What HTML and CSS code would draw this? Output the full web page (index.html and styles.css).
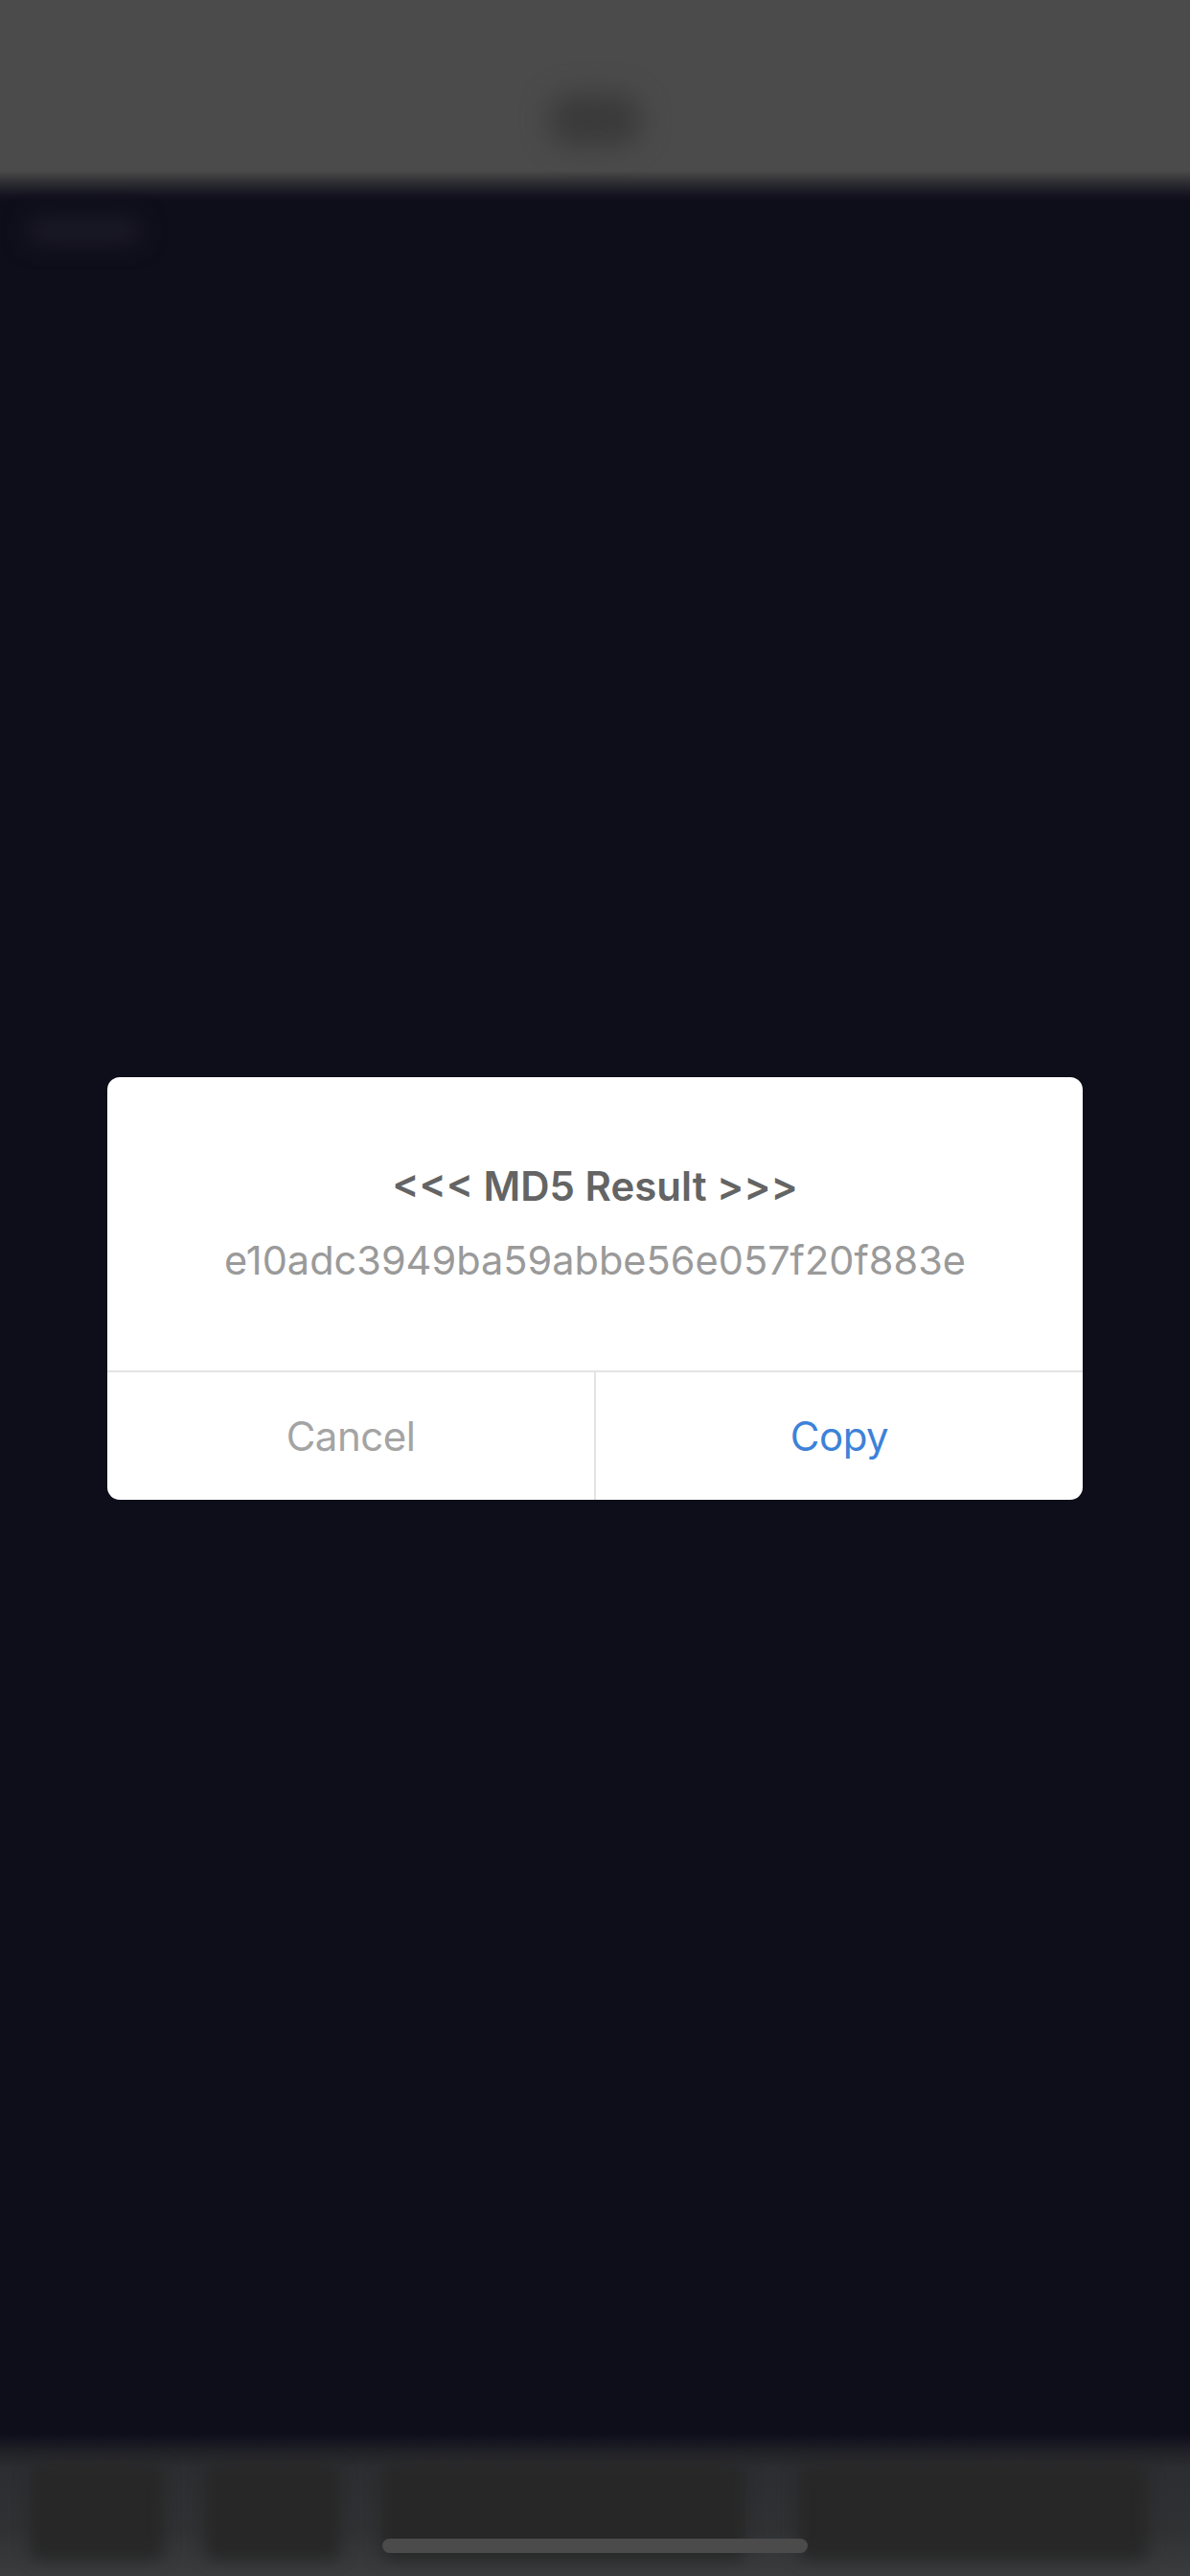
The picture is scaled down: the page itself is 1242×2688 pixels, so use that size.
FILE: index.html
```html
<!DOCTYPE html>
<html lang="en">
<head>
<meta charset="utf-8">
<title>MD5</title>
<link rel="stylesheet" href="styles.css">
</head>
<body>
<div class="app">
  <header class="nav">
    <div class="nav-title"></div>
  </header>
  <main class="content">
    <div class="content-label"></div>
  </main>
  <footer class="toolbar">
    <div class="tool tool-a"></div>
    <div class="tool tool-b"></div>
    <div class="tool tool-c"></div>
    <div class="tool tool-d"></div>
  </footer>
  <div class="home-indicator"></div>
</div>

<div class="overlay">
  <div class="dialog">
    <div class="dialog-body">
      <div class="dialog-title">&lt;&lt;&lt; MD5 Result &gt;&gt;&gt;</div>
      <div class="dialog-message">e10adc3949ba59abbe56e057f20f883e</div>
    </div>
    <div class="dialog-actions">
      <div class="action action-cancel">Cancel</div>
      <div class="action action-copy">Copy</div>
    </div>
  </div>
</div>
</body>
</html>
```
FILE: styles.css
```css
* { box-sizing: border-box; }

html, body {
  margin: 0;
  padding: 0;
  width: 1242px;
  height: 2688px;
  overflow: hidden;
  background: #0e0d1a;
  font-family: Inter, "Liberation Sans", sans-serif;
}

.app {
  position: relative;
  width: 1242px;
  height: 2688px;
  display: flex;
  flex-direction: column;
}

.nav {
  height: 210px;
  flex: none;
  background: linear-gradient(to bottom, #4b4b4b 0, #4b4b4b 178px, #2a2a30 192px, #14131f 204px, #0e0d1a 210px);
  display: flex;
  justify-content: center;
  padding-top: 98px;
}

.nav-title {
  width: 96px;
  height: 54px;
  border-radius: 24px;
  background: #3a3a3a;
  filter: blur(14px);
}

.content {
  flex: 1;
  padding: 18px 0 0 28px;
}

.content-label {
  width: 120px;
  height: 26px;
  border-radius: 10px;
  background: #1c1b26;
  filter: blur(12px);
}

.toolbar {
  height: 148px;
  flex: none;
  background: linear-gradient(to bottom, #0e0d1a 0, #1f1f26 16px, #2c2d30 34px, #303133 100px, #3a3c3e 148px);
  display: flex;
  align-items: center;
  gap: 43px;
  padding: 14px 0 0 31px;
}

.tool {
  height: 100px;
  border-radius: 10px;
  background: #272727;
  filter: blur(8px);
  flex: none;
}

.tool-a { width: 140px; }
.tool-b { width: 141px; }
.tool-c { width: 380px; }
.tool-d { width: 365px; margin-left: 12px; }

.home-indicator {
  position: absolute;
  left: 399px;
  top: 2649px;
  width: 444px;
  height: 15px;
  border-radius: 8px;
  background: #4b4b4b;
}

.overlay {
  position: absolute;
  left: 0;
  top: 0;
  width: 1242px;
  height: 2688px;
  display: flex;
  justify-content: center;
  padding-top: 1124px;
}

.dialog {
  width: 1018px;
  height: 441px;
  background: #ffffff;
  border-radius: 13px;
  display: flex;
  flex-direction: column;
  overflow: hidden;
}

.dialog-body {
  height: 306px;
  flex: none;
  display: flex;
  flex-direction: column;
  align-items: center;
  padding-top: 89px;
}

.dialog-title {
  font-size: 42px;
  line-height: 50px;
  font-weight: 600;
  color: #646464;
}

.dialog-message {
  margin-top: 27px;
  font-size: 41.5px;
  line-height: 50px;
  color: #9a9a9a;
}

.dialog-actions {
  flex: 1;
  display: flex;
  border-top: 2px solid #e3e3e3;
}

.action {
  flex: 1;
  display: flex;
  align-items: center;
  justify-content: center;
  font-size: 42px;
  letter-spacing: -0.5px;
}

.action-cancel {
  color: #a4a4a4;
  border-right: 2px solid #e3e3e3;
}

.action-copy {
  color: #3d82d9;
}
```
